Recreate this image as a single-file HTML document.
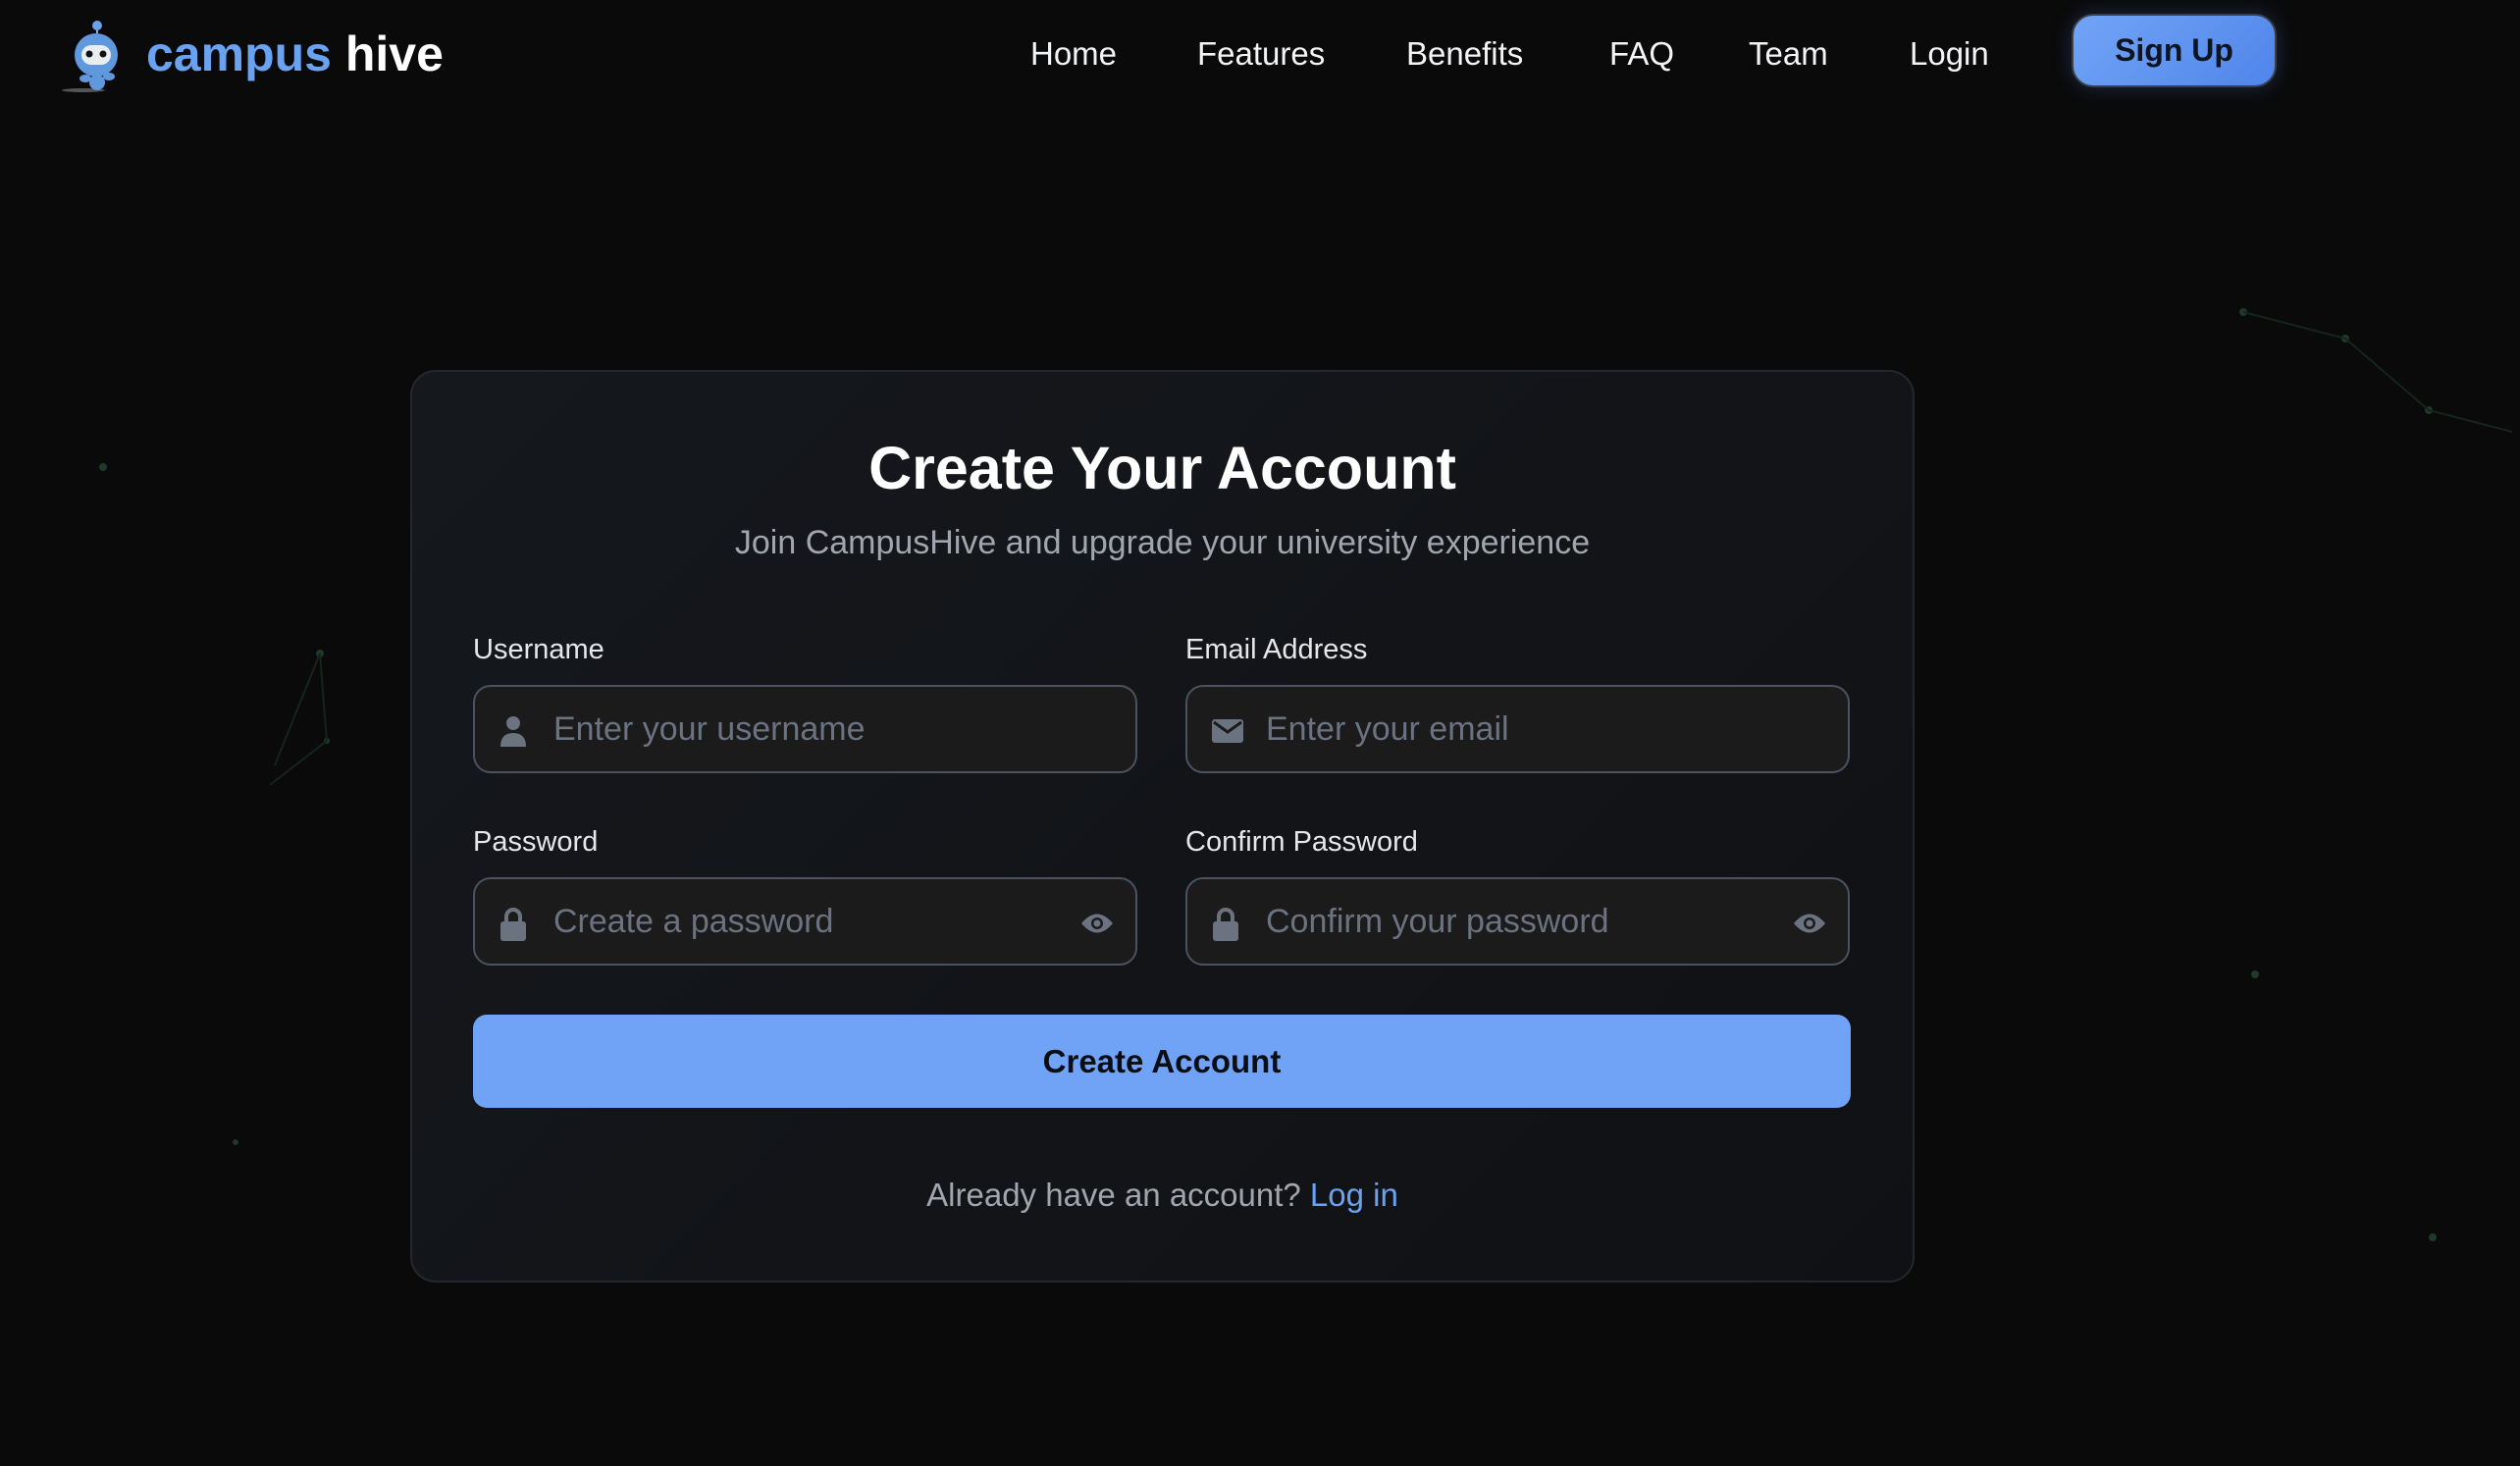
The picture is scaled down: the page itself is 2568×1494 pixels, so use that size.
<!DOCTYPE html>
<html><head><meta charset="utf-8"><style>
*{margin:0;padding:0;box-sizing:border-box}
body{width:2568px;height:1494px;background:#0a0a0b;font-family:"Liberation Sans",sans-serif;position:relative;overflow:hidden;color:#fff}
.a{position:absolute}
.nav{font-size:33px;color:#f3f4f6;top:36px;white-space:nowrap}
.card{left:418px;top:377px;width:1533px;height:930px;border:2px solid #24272d;border-radius:26px;background:linear-gradient(135deg,#15181d,#101114)}
.lbl{font-size:29px;color:#e5e7eb;white-space:nowrap}
.inp{width:677px;height:90px;border:2px solid #4b5260;border-radius:18px;background:#1b1b1c}
.ph{position:absolute;left:80px;top:24px;font-size:34px;color:#6b7280;white-space:nowrap}
.ic{position:absolute;left:24px;top:28px}
.eye{position:absolute;right:22px;top:32px}
</style></head><body>
<svg class="a" style="left:0;top:0" width="2568" height="1494">
<g fill="#1e3a2a"><circle cx="105" cy="476" r="4"/><circle cx="326" cy="666" r="4"/><circle cx="333" cy="755" r="3"/><circle cx="2286" cy="318" r="4"/><circle cx="2390" cy="345" r="4"/><circle cx="2475" cy="418" r="4"/><circle cx="2298" cy="993" r="4"/><circle cx="2479" cy="1261" r="4"/><circle cx="240" cy="1164" r="3"/></g>
<g stroke="#15251c" stroke-width="2"><line x1="2286" y1="318" x2="2390" y2="345"/><line x1="2390" y1="345" x2="2475" y2="418"/><line x1="2475" y1="418" x2="2560" y2="440"/><line x1="326" y1="666" x2="333" y2="755"/><line x1="333" y1="755" x2="275" y2="800"/><line x1="326" y1="666" x2="280" y2="780"/></g>
</svg>
<svg class="a" style="left:55px;top:18px" width="80" height="80" viewBox="0 0 80 80">
<ellipse cx="30" cy="74" rx="22" ry="2" fill="#555"/>
<line x1="44" y1="6" x2="44" y2="16" stroke="#7fb0ea" stroke-width="2"/>
<circle cx="44" cy="8" r="5" fill="#6aa0e6"/>
<circle cx="43" cy="38" r="22" fill="#5f98dc"/>
<rect x="28" y="28" width="30" height="20" rx="10" fill="#e8edf2"/>
<circle cx="36" cy="37" r="3.5" fill="#111"/><circle cx="50" cy="37" r="3.5" fill="#111"/>
<circle cx="44" cy="66" r="8" fill="#5f98dc"/><ellipse cx="32" cy="62" rx="6" ry="4" fill="#5f98dc"/><ellipse cx="56" cy="60" rx="6" ry="4" fill="#5f98dc"/>
</svg>
<div class="a" style="left:149px;top:26px;font-size:50px;font-weight:bold;white-space:nowrap"><span style="color:#6aa2f2">campus</span> <span style="color:#fff">hive</span></div>
<div class="a nav" style="left:1050px">Home</div>
<div class="a nav" style="left:1220px">Features</div>
<div class="a nav" style="left:1433px">Benefits</div>
<div class="a nav" style="left:1640px">FAQ</div>
<div class="a nav" style="left:1782px">Team</div>
<div class="a nav" style="left:1946px">Login</div>
<div class="a" style="left:2111px;top:14px;width:209px;height:75px;border-radius:22px;background:linear-gradient(135deg,#72a5f6,#4f85ea);border:2px solid #3a3f48;box-shadow:0 0 20px rgba(80,130,230,.25);color:#0d1422;font-size:32px;font-weight:bold;text-align:center;line-height:71px">Sign Up</div>
<div class="a card"></div>
<div class="a" style="left:418px;width:1533px;top:442px;text-align:center;font-size:61px;font-weight:bold">Create Your Account</div>
<div class="a" style="left:418px;width:1533px;top:534px;text-align:center;font-size:34px;color:#a1a6ae">Join CampusHive and upgrade your university experience</div>
<div class="a lbl" style="left:482px;top:646px">Username</div>
<div class="a lbl" style="left:1208px;top:646px">Email Address</div>
<div class="a inp" style="left:482px;top:698px"><svg class="ic" width="30" height="34" viewBox="0 0 30 34"><circle cx="15" cy="9" r="7" fill="#6b7280"/><path d="M2 33 Q2 19 15 19 Q28 19 28 33Z" fill="#6b7280"/></svg><div class="ph">Enter your username</div></div>
<div class="a inp" style="left:1208px;top:698px"><svg class="ic" width="34" height="34" viewBox="0 0 34 34"><rect x="1" y="5" width="32" height="24" rx="3" fill="#6b7280"/><path d="M3 8 L17 18 L31 8" stroke="#1b1b1c" stroke-width="3" fill="none"/></svg><div class="ph">Enter your email</div></div>
<div class="a lbl" style="left:482px;top:842px">Password</div>
<div class="a lbl" style="left:1208px;top:842px">Confirm Password</div>
<div class="a inp" style="left:482px;top:894px"><svg class="ic" width="30" height="36" viewBox="0 0 30 36"><path d="M8 16 V10 A7 7 0 0 1 22 10 V16" stroke="#6b7280" stroke-width="4" fill="none"/><rect x="2" y="15" width="26" height="20" rx="3" fill="#6b7280"/></svg><div class="ph">Create a password</div><svg class="eye" width="34" height="26" viewBox="0 0 34 26"><path d="M1 13 Q17 -6 33 13 Q17 32 1 13Z" fill="#6b7280"/><circle cx="17" cy="13" r="6" fill="#1b1b1c"/><circle cx="17" cy="13" r="3.5" fill="#6b7280"/></svg></div>
<div class="a inp" style="left:1208px;top:894px"><svg class="ic" width="30" height="36" viewBox="0 0 30 36"><path d="M8 16 V10 A7 7 0 0 1 22 10 V16" stroke="#6b7280" stroke-width="4" fill="none"/><rect x="2" y="15" width="26" height="20" rx="3" fill="#6b7280"/></svg><div class="ph">Confirm your password</div><svg class="eye" width="34" height="26" viewBox="0 0 34 26"><path d="M1 13 Q17 -6 33 13 Q17 32 1 13Z" fill="#6b7280"/><circle cx="17" cy="13" r="6" fill="#1b1b1c"/><circle cx="17" cy="13" r="3.5" fill="#6b7280"/></svg></div>
<div class="a" style="left:482px;top:1034px;width:1404px;height:95px;border-radius:14px;background:#70a3f5;color:#0a0d14;font-size:33px;font-weight:bold;text-align:center;line-height:95px">Create Account</div>
<div class="a" style="left:418px;width:1533px;top:1199px;text-align:center;font-size:33px;color:#a1a6ae">Already have an account? <span style="color:#6aa2f2">Log in</span></div>
</body></html>
